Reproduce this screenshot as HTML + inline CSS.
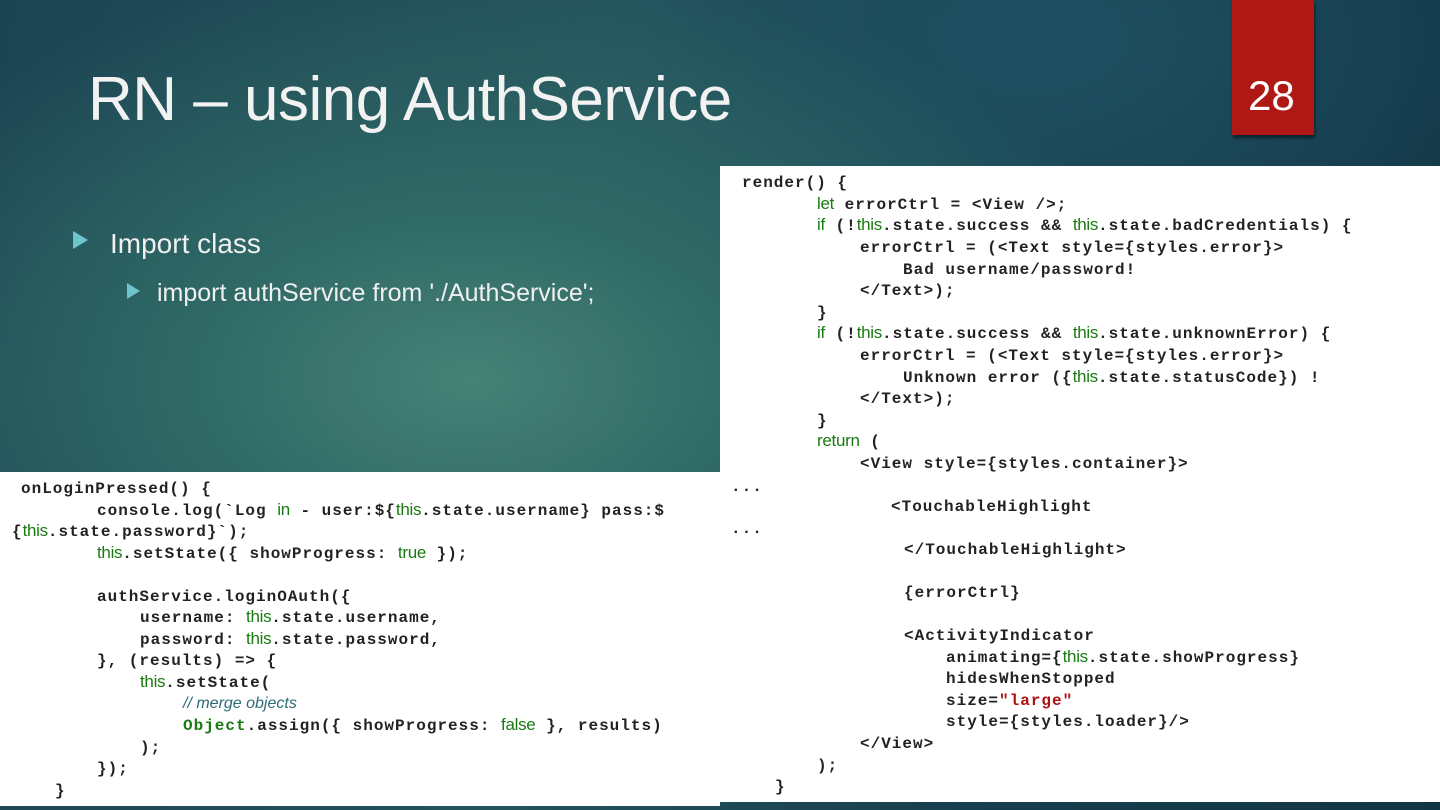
<!DOCTYPE html>
<html><head><meta charset="utf-8"><style>
*{margin:0;padding:0}
body{width:1440px;height:810px;overflow:hidden;position:relative;font-family:"Liberation Sans",sans-serif;
background:radial-gradient(ellipse 700px 420px at 470px 380px,#468276 0%,#2f6966 40%,rgba(30,70,80,0) 100%),
radial-gradient(ellipse 500px 300px at 1050px 40px,#1f5062 0%,rgba(20,55,70,0) 100%),
linear-gradient(100deg,#1c4352 0%,#24535c 40%,#173f4f 70%,#123545 100%);}
.t{position:absolute;left:88px;top:64px;font-size:62px;color:#f2f2f2;letter-spacing:-0.5px}
.num{position:absolute;left:1232px;top:0;width:82px;height:135px;background:#b01816;box-shadow:1px 3px 3px rgba(0,0,0,.5)}
.num span{position:absolute;left:16px;top:72px;font-size:42px;color:#fff}
.b{position:absolute;color:#f0f0f0}
.tri{position:absolute;width:0;height:0;border-top:9px solid transparent;border-bottom:9px solid transparent;border-left:15px solid #6ec6cc}
.box{position:absolute;background:#fff}
.c{position:absolute;white-space:pre;font-family:"Liberation Mono",monospace;font-weight:bold;font-size:16px;letter-spacing:1px;color:#222;line-height:20px;height:20px}
.g{font-family:"Liberation Sans Narrow","Liberation Sans",sans-serif;font-weight:normal;color:#1a7a12;font-size:17px;letter-spacing:-0.3px;line-height:0}
.cm{font-family:"Liberation Sans Narrow","Liberation Sans",sans-serif;font-weight:normal;font-style:italic;color:#2c6c78;font-size:16px;letter-spacing:0;line-height:0}
.o{color:#1a7a12}.r{color:#b01010}
</style></head><body>
<div class="t">RN – using AuthService</div>
<div class="num"><span>28</span></div>
<div class="tri" style="left:73px;top:231px"></div>
<div class="b" style="left:110px;top:228px;font-size:28px">Import class</div>
<div class="tri" style="left:127px;top:283px;border-top-width:8px;border-bottom-width:8px;border-left-width:13px"></div>
<div class="b" style="left:157px;top:279px;font-size:25px">import authService from './AuthService';</div>

<div class="box" style="left:720px;top:166px;width:720px;height:636px"></div>
<div class="box" style="left:0;top:472px;width:720px;height:334px"></div>

<div class="c" style="left:742px;top:173px">render() {</div>
<div class="c" style="left:817px;top:195px"><span class="g">let</span> errorCtrl = &lt;View /&gt;;</div>
<div class="c" style="left:817px;top:216px"><span class="g">if</span> (!<span class="g">this</span>.state.success &amp;&amp; <span class="g">this</span>.state.badCredentials) {</div>
<div class="c" style="left:860px;top:238px">errorCtrl = (&lt;Text style={styles.error}&gt;</div>
<div class="c" style="left:903px;top:260px">Bad username/password!</div>
<div class="c" style="left:860px;top:281px">&lt;/Text&gt;);</div>
<div class="c" style="left:817px;top:303px">}</div>
<div class="c" style="left:817px;top:324px"><span class="g">if</span> (!<span class="g">this</span>.state.success &amp;&amp; <span class="g">this</span>.state.unknownError) {</div>
<div class="c" style="left:860px;top:346px">errorCtrl = (&lt;Text style={styles.error}&gt;</div>
<div class="c" style="left:903px;top:368px">Unknown error ({<span class="g">this</span>.state.statusCode}) !</div>
<div class="c" style="left:860px;top:389px">&lt;/Text&gt;);</div>
<div class="c" style="left:817px;top:411px">}</div>
<div class="c" style="left:817px;top:432px"><span class="g">return</span> (</div>
<div class="c" style="left:860px;top:454px">&lt;View style={styles.container}&gt;</div>
<div class="c" style="left:731px;top:477px">...</div>
<div class="c" style="left:891px;top:497px">&lt;TouchableHighlight</div>
<div class="c" style="left:731px;top:519px">...</div>
<div class="c" style="left:904px;top:540px">&lt;/TouchableHighlight&gt;</div>
<div class="c" style="left:904px;top:583px">{errorCtrl}</div>
<div class="c" style="left:904px;top:626px">&lt;ActivityIndicator</div>
<div class="c" style="left:946px;top:648px">animating={<span class="g">this</span>.state.showProgress}</div>
<div class="c" style="left:946px;top:669px">hidesWhenStopped</div>
<div class="c" style="left:946px;top:691px">size=<span class="r">"large"</span></div>
<div class="c" style="left:946px;top:712px">style={styles.loader}/&gt;</div>
<div class="c" style="left:860px;top:734px">&lt;/View&gt;</div>
<div class="c" style="left:817px;top:756px">);</div>
<div class="c" style="left:775px;top:777px">}</div>

<div class="c" style="left:21px;top:479px">onLoginPressed() {</div>
<div class="c" style="left:97px;top:501px">console.log(`Log <span class="g">in</span> - user:${<span class="g">this</span>.state.username} pass:$</div>
<div class="c" style="left:12px;top:522px">{<span class="g">this</span>.state.password}`);</div>
<div class="c" style="left:97px;top:544px"><span class="g">this</span>.setState({ showProgress: <span class="g">true</span> });</div>
<div class="c" style="left:97px;top:587px">authService.loginOAuth({</div>
<div class="c" style="left:140px;top:608px">username: <span class="g">this</span>.state.username,</div>
<div class="c" style="left:140px;top:630px">password: <span class="g">this</span>.state.password,</div>
<div class="c" style="left:97px;top:651px">}, (results) =&gt; {</div>
<div class="c" style="left:140px;top:673px"><span class="g">this</span>.setState(</div>
<div class="c" style="left:183px;top:694px"><span class="cm">// merge objects</span></div>
<div class="c" style="left:183px;top:716px"><span class="o">Object</span>.assign({ showProgress: <span class="g">false</span> }, results)</div>
<div class="c" style="left:140px;top:738px">);</div>
<div class="c" style="left:97px;top:759px">});</div>
<div class="c" style="left:55px;top:781px">}</div>
</body></html>
